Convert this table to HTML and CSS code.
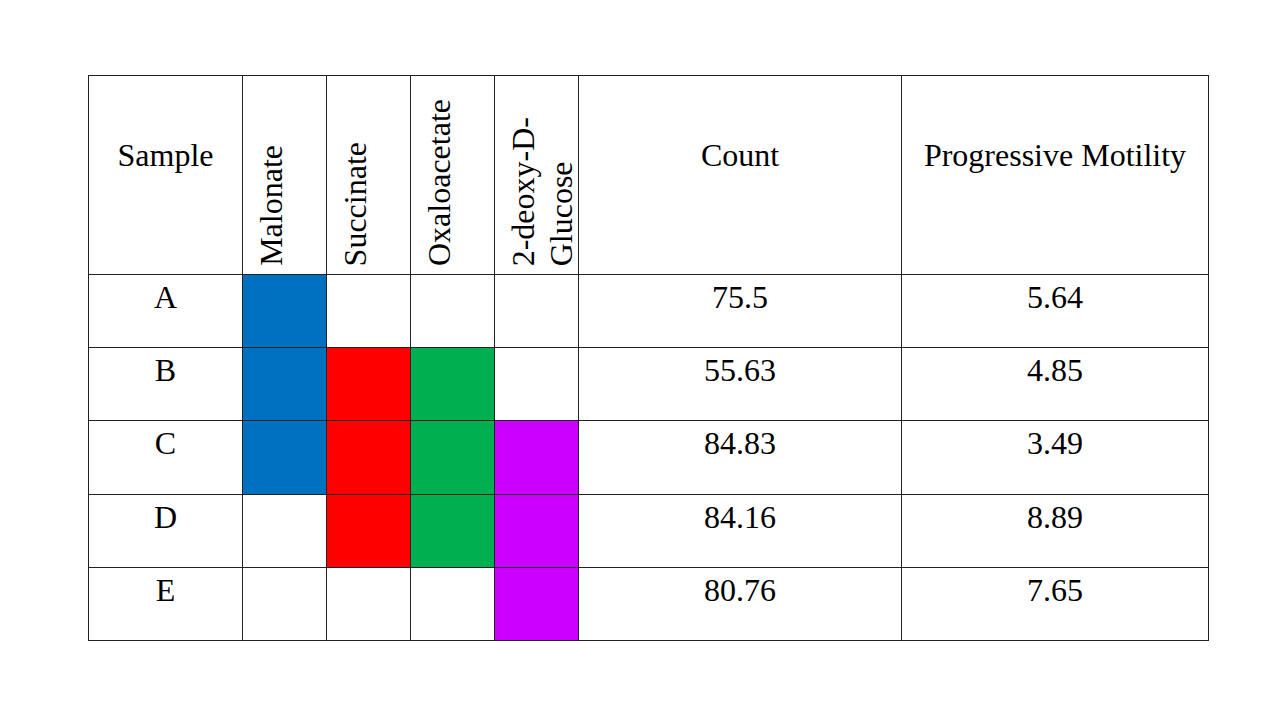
FILE: index.html
```html
<!DOCTYPE html>
<html lang="en">
<head>
<meta charset="utf-8">
<title>Sample table</title>
<link rel="stylesheet" href="styles.css">
</head>
<body>
<table class="grid">
  <colgroup>
    <col class="c-sample">
    <col class="c-flag">
    <col class="c-flag">
    <col class="c-flag">
    <col class="c-flag">
    <col class="c-count">
    <col class="c-motility">
  </colgroup>
  <thead>
    <tr class="head-row">
      <th class="h-text">Sample</th>
      <th class="h-vert"><div class="vert">Malonate</div></th>
      <th class="h-vert"><div class="vert">Succinate</div></th>
      <th class="h-vert"><div class="vert">Oxaloacetate</div></th>
      <th class="h-vert"><div class="vert">2-deoxy-D-<br>Glucose</div></th>
      <th class="h-text">Count</th>
      <th class="h-text">Progressive Motility</th>
    </tr>
  </thead>
  <tbody>
    <tr class="row">
      <td>A</td>
      <td class="blue"></td><td></td><td></td><td></td>
      <td>75.5</td><td>5.64</td>
    </tr>
    <tr class="row">
      <td>B</td>
      <td class="blue"></td><td class="red"></td><td class="green"></td><td></td>
      <td>55.63</td><td>4.85</td>
    </tr>
    <tr class="row tall">
      <td>C</td>
      <td class="blue"></td><td class="red"></td><td class="green"></td><td class="purple"></td>
      <td>84.83</td><td>3.49</td>
    </tr>
    <tr class="row">
      <td>D</td>
      <td></td><td class="red"></td><td class="green"></td><td class="purple"></td>
      <td>84.16</td><td>8.89</td>
    </tr>
    <tr class="row">
      <td>E</td>
      <td></td><td></td><td></td><td class="purple"></td>
      <td>80.76</td><td>7.65</td>
    </tr>
  </tbody>
</table>
</body>
</html>
```

FILE: styles.css
```css
html, body {
  margin: 0;
  padding: 0;
  background: #ffffff;
}

body {
  font-family: "Liberation Serif", "Times New Roman", serif;
  font-size: 32px;
  color: #000000;
  padding: 75px 0 0 88px;
}

.grid {
  border-collapse: collapse;
  table-layout: fixed;
  width: 1120px;
}

.c-sample { width: 154px; }
.c-flag { width: 84px; }
.c-count { width: 323px; }
.c-motility { width: 307px; }

.grid th,
.grid td {
  border: 1px solid #222222;
  padding: 0;
  font-weight: normal;
  line-height: 38px;
  text-align: center;
  vertical-align: top;
}

.head-row { height: 199px; }

.h-text {
  padding-top: 60px !important;
}

.h-vert {
  vertical-align: bottom !important;
  text-align: left !important;
  padding: 0 0 8px 9px !important;
}

.vert {
  display: block;
  width: max-content;
  writing-mode: vertical-rl;
  transform: rotate(180deg);
  white-space: nowrap;
  line-height: 38px;
}

.row { height: 73px; }
.row.tall { height: 74px; }

.row td {
  padding-top: 3px;
}

.blue { background: #0070c0; }
.red { background: #ff0000; }
.green { background: #00b050; }
.purple { background: #cc00ff; }
```
